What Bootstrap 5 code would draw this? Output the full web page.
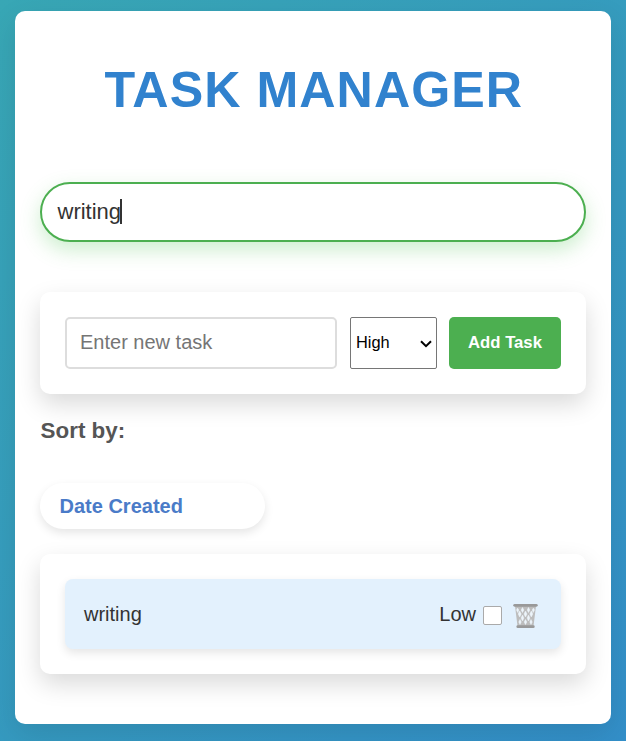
<!DOCTYPE html>
<html lang="en">
<head>
<meta charset="utf-8">
<meta name="viewport" content="width=device-width, initial-scale=1">
<title>Task Manager</title>
<link href="https://cdn.jsdelivr.net/npm/bootstrap@5.3.0/dist/css/bootstrap.min.css" rel="stylesheet">
<style>
body{font-family:"Liberation Sans",Arial,sans-serif;height:741px;overflow:hidden;padding:11px 15px 17px;color:#333;background:linear-gradient(135deg,#38a7b5,#338fc9)}
.panel{height:713px;border-radius:10px;padding:0 25px;box-shadow:0 10px 30px rgba(0,0,0,.1)}
.title{font-size:50.2px;line-height:60px;letter-spacing:1.05px;color:#3182ce;padding:49px 0 0 1.5px;margin-bottom:62px}
.search{height:60px;border:2px solid #4caf50;border-radius:30px;padding:0 15.5px 1px;font-size:22px;box-shadow:0 8px 20px rgba(76,195,80,.28)}
.caret{width:2px;height:25px;background:#333;margin-left:-1px}
.box{border-radius:10px;padding:25px;box-shadow:0 10px 25px rgba(0,0,0,.15)}
.entry{height:102px;margin-top:50px}
.entry .form-control{width:272px;height:52px;border:2px solid #ddd;border-radius:5px;padding:0 13px 1px;font-size:20px;color:#333}
.entry .form-control::placeholder{color:#757575}
.priority{width:87px;height:52px;margin-left:13px;border:1px solid #767676;border-radius:2px;padding:0 4px 2px 5px;font-size:16.4px;color:#000}
.add{width:112px;height:52px;margin-left:12px;border:0;border-radius:5px;background:#4caf50;padding:0 0 1px;font-size:16.7px}
.sort-label{font-size:22.4px;line-height:28px;color:#555;margin:23px 0 0 .6px}
.sort{width:225px;height:46px;margin-top:38px;border-radius:25px;padding:0 19.500px;font-size:20px;color:#4a7bc8;box-shadow:0 4px 10px rgba(0,0,0,.1)}
.tasks{height:120px;margin-top:25px}
.task{height:70px;border-radius:8px;background:#e3f1fd;padding:0 23px 0 19px;font-size:20px;box-shadow:0 4px 10px rgba(0,0,0,.1)}
.task .form-check-input{width:19px;height:19px;border:1px solid #aaa;border-radius:2px;margin:3px 0 0 7px}
.bin{margin:3px 0 0 11px}
</style>
<script src="https://cdn.jsdelivr.net/npm/bootstrap@5.3.0/dist/js/bootstrap.bundle.min.js"></script>
</head>
<body>
<main class="panel bg-white">
  <h1 class="title text-center fw-bold">TASK MANAGER</h1>
  <div class="search d-flex align-items-center bg-white"><span>writing</span><span class="caret"></span></div>
  <section class="box entry bg-white d-flex">
    <input class="form-control" placeholder="Enter new task" aria-label="New task">
    <div class="priority d-flex align-items-center justify-content-between"><span>High</span>
      <svg width="12" height="8" viewBox="0 0 12 8" class="mt-1" fill="none" stroke="#000" stroke-width="2"><path d="M1 1.200 6 6.200 11 1.200"/></svg>
    </div>
    <button class="btn btn-success add fw-bold">Add Task</button>
  </section>
  <div class="sort-label fw-bold">Sort by:</div>
  <div class="sort bg-white fw-bold d-flex align-items-center">Date Created</div>
  <section class="box tasks bg-white">
    <div class="task d-flex align-items-center">
      <span class="me-auto">writing</span><span>Low</span>
      <input class="form-check-input" type="checkbox" aria-label="Done">
      <svg class="bin" width="25" height="26" viewBox="0 0 25 26" fill="none">
        <path d="M2 3h21l-2.500 20H4.500z" fill="#bdbdbd"/>
        <path d="M9.500 4.500l1.300 2.500-1.300 2.500L8.200 7zM15.500 4.500l1.300 2.500-1.300 2.500L14.200 7zM4.500 5l1.300 2-1 2.500L3.500 7zM20.500 5l1 2-1.300 2.500L19.200 7zM6.700 8l1.500 3-1.500 3-1.500-3zM12.500 8l1.500 3-1.500 3-1.500-3zM18.300 8l1.500 3-1.500 3-1.500-3zM9.500 12l1.400 3-1.400 3-1.400-3zM15.500 12l1.400 3-1.400 3-1.400-3zM7 16.500l1.200 2.500L7 21.500 5.800 19zM12.500 16.500l1.300 2.500-1.300 2.500-1.300-2.500zM18 16.500l1.200 2.500-1.200 2.500-1.200-2.500z" fill="#edf5fb" stroke="#edf5fb" stroke-width=".5"/>
        <path d="M1.700 2.300h21.600" stroke="#999" stroke-width="2.800" stroke-linecap="round"/>
        <path d="M4.800 23.700h15.500" stroke="#999" stroke-width="2.800" stroke-linecap="round"/>
      </svg>
    </div>
  </section>
</main>
</body>
</html>
